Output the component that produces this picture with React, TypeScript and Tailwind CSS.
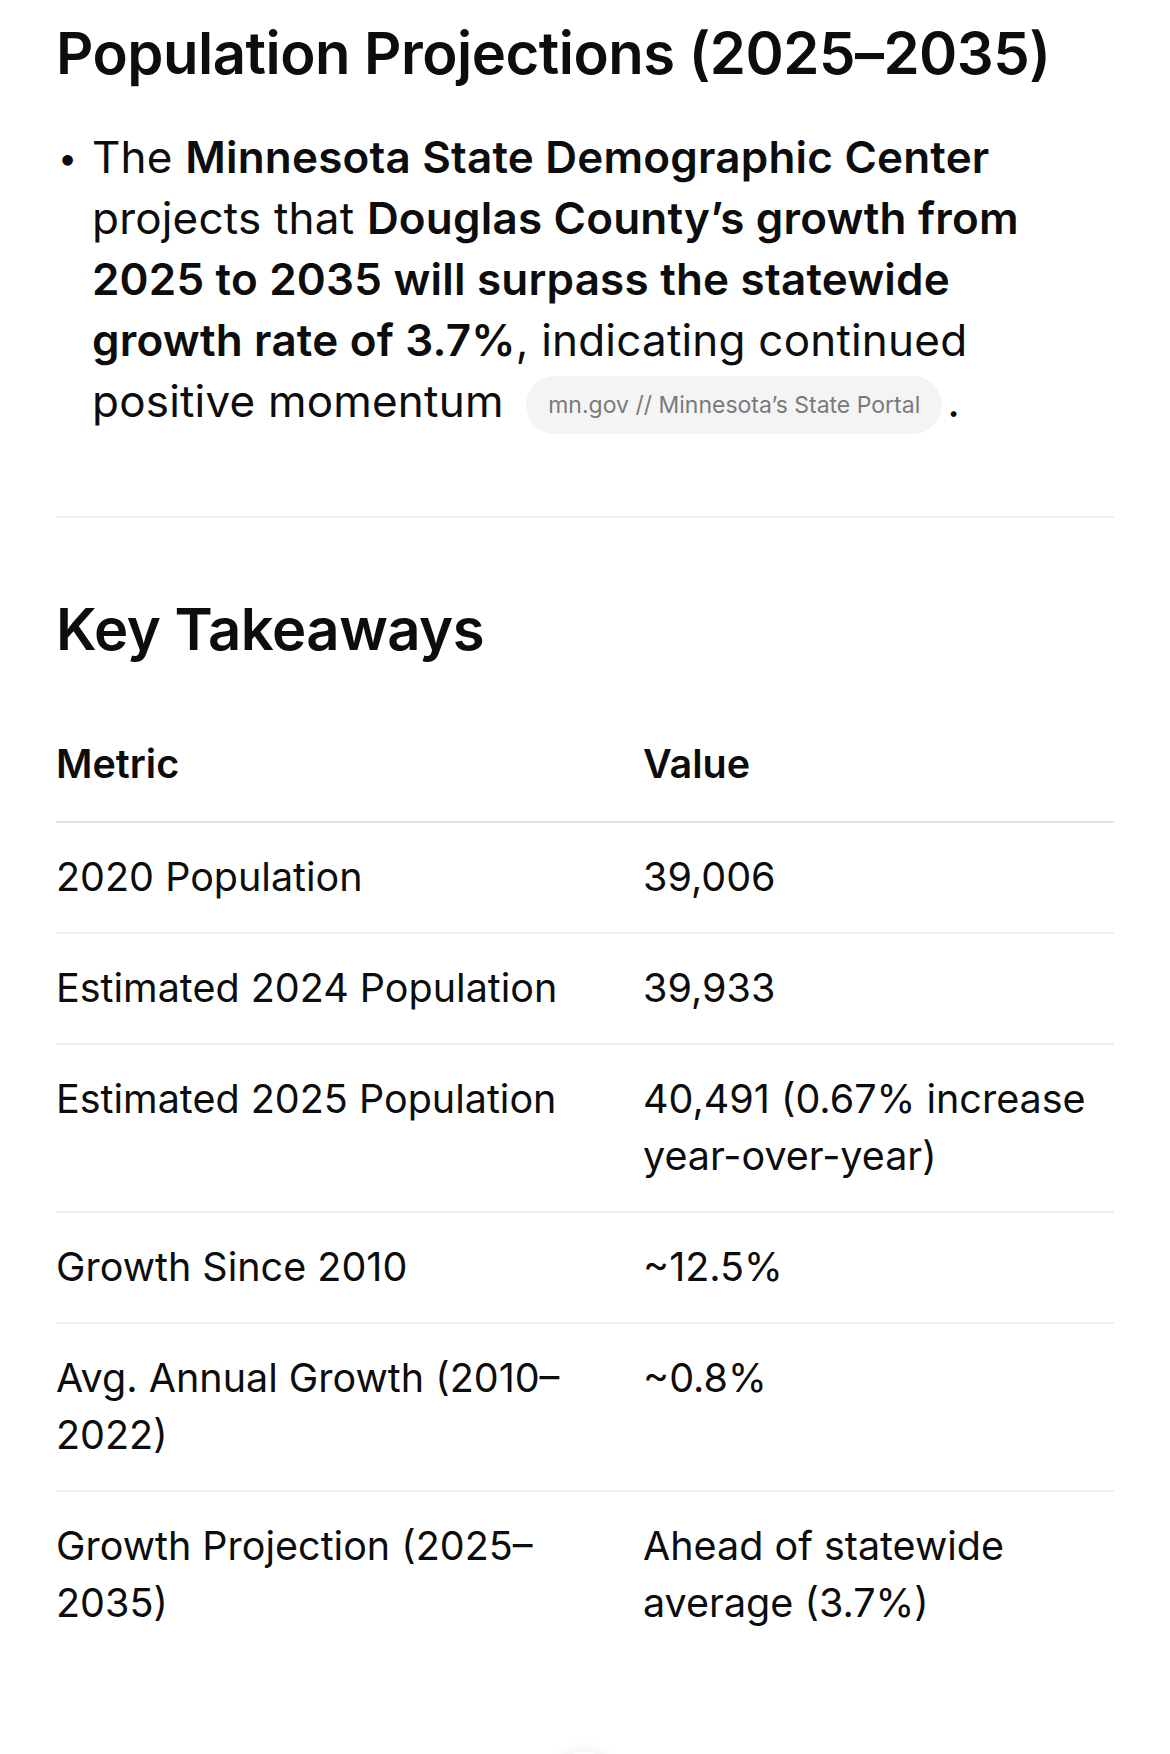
import React from 'react';

const rows: { metric: string; value: string }[] = [
  { metric: '2020 Population', value: '39,006' },
  { metric: 'Estimated 2024 Population', value: '39,933' },
  { metric: 'Estimated 2025 Population', value: '40,491 (0.67% increase year-over-year)' },
  { metric: 'Growth Since 2010', value: '~12.5%' },
  { metric: 'Avg. Annual Growth (2010–2022)', value: '~0.8%' },
  { metric: 'Growth Projection (2025–2035)', value: 'Ahead of statewide average (3.7%)' },
];

function SourceChip({ label }: { label: string }) {
  return (
    <span className="inline-block h-[58px] rounded-full bg-[#f4f4f4] px-[22px] align-middle text-[23px] leading-[58px] font-normal tracking-normal text-[#7a7a7a]">
      {label}
    </span>
  );
}

export default function App() {
  return (
    <div
      className="relative min-h-[1754px] overflow-hidden bg-white px-[56px] pt-[19px] text-[#0d0d0d]"
      style={{ fontFamily: 'Inter, "Noto Sans", sans-serif' }}
    >
      <h2 className="text-[58px] leading-[1.2] font-semibold tracking-[-0.5px]">
        Population Projections (2025–2035)
      </h2>

      {/* bullet paragraph */}
      <div className="mt-[38px] flex pr-[80px] text-[44px] leading-[61px] tracking-[0.2px]">
        <span className="w-[36px] shrink-0 pl-[2px] text-[34px]">•</span>
        <p>
          The <strong className="font-semibold">Minnesota State Demographic Center</strong> projects
          that{' '}
          <strong className="font-semibold">
            Douglas County’s growth from 2025 to 2035 will surpass the statewide growth rate of 3.7%
          </strong>
          , indicating continued positive momentum{' '}
          <span className="ml-[10px] mr-[5px]">
            <SourceChip label="mn.gov // Minnesota’s State Portal" />
          </span>
          .
        </p>
      </div>

      <hr className="mt-[82px] border-0 border-t-2 border-[#efefef]" />

      <h2 className="mt-[77px] text-[58px] leading-[1.2] font-semibold tracking-[-0.5px]">
        Key Takeaways
      </h2>

      <div className="mt-[44px] text-[39.5px] leading-[57px]">
        <div className="grid grid-cols-[587px_1fr] border-b-2 border-[#e3e3e3] font-semibold">
          <div className="py-[28px] pr-[28px]">Metric</div>
          <div className="py-[28px]">Value</div>
        </div>
        {rows.map((row, i) => (
          <div
            key={row.metric}
            className={`grid grid-cols-[587px_1fr] ${
              i < rows.length - 1 ? 'border-b-2 border-[#efefef]' : ''
            }`}
          >
            <div className="py-[26px] pr-[28px]">{row.metric}</div>
            <div className="py-[26px] pr-[20px]">{row.value}</div>
          </div>
        ))}
      </div>

      <div className="absolute left-[550px] top-[1752px] h-[68px] w-[68px] rounded-full bg-white shadow-[0_0_16px_rgba(0,0,0,0.08)]" />
    </div>
  );
}
